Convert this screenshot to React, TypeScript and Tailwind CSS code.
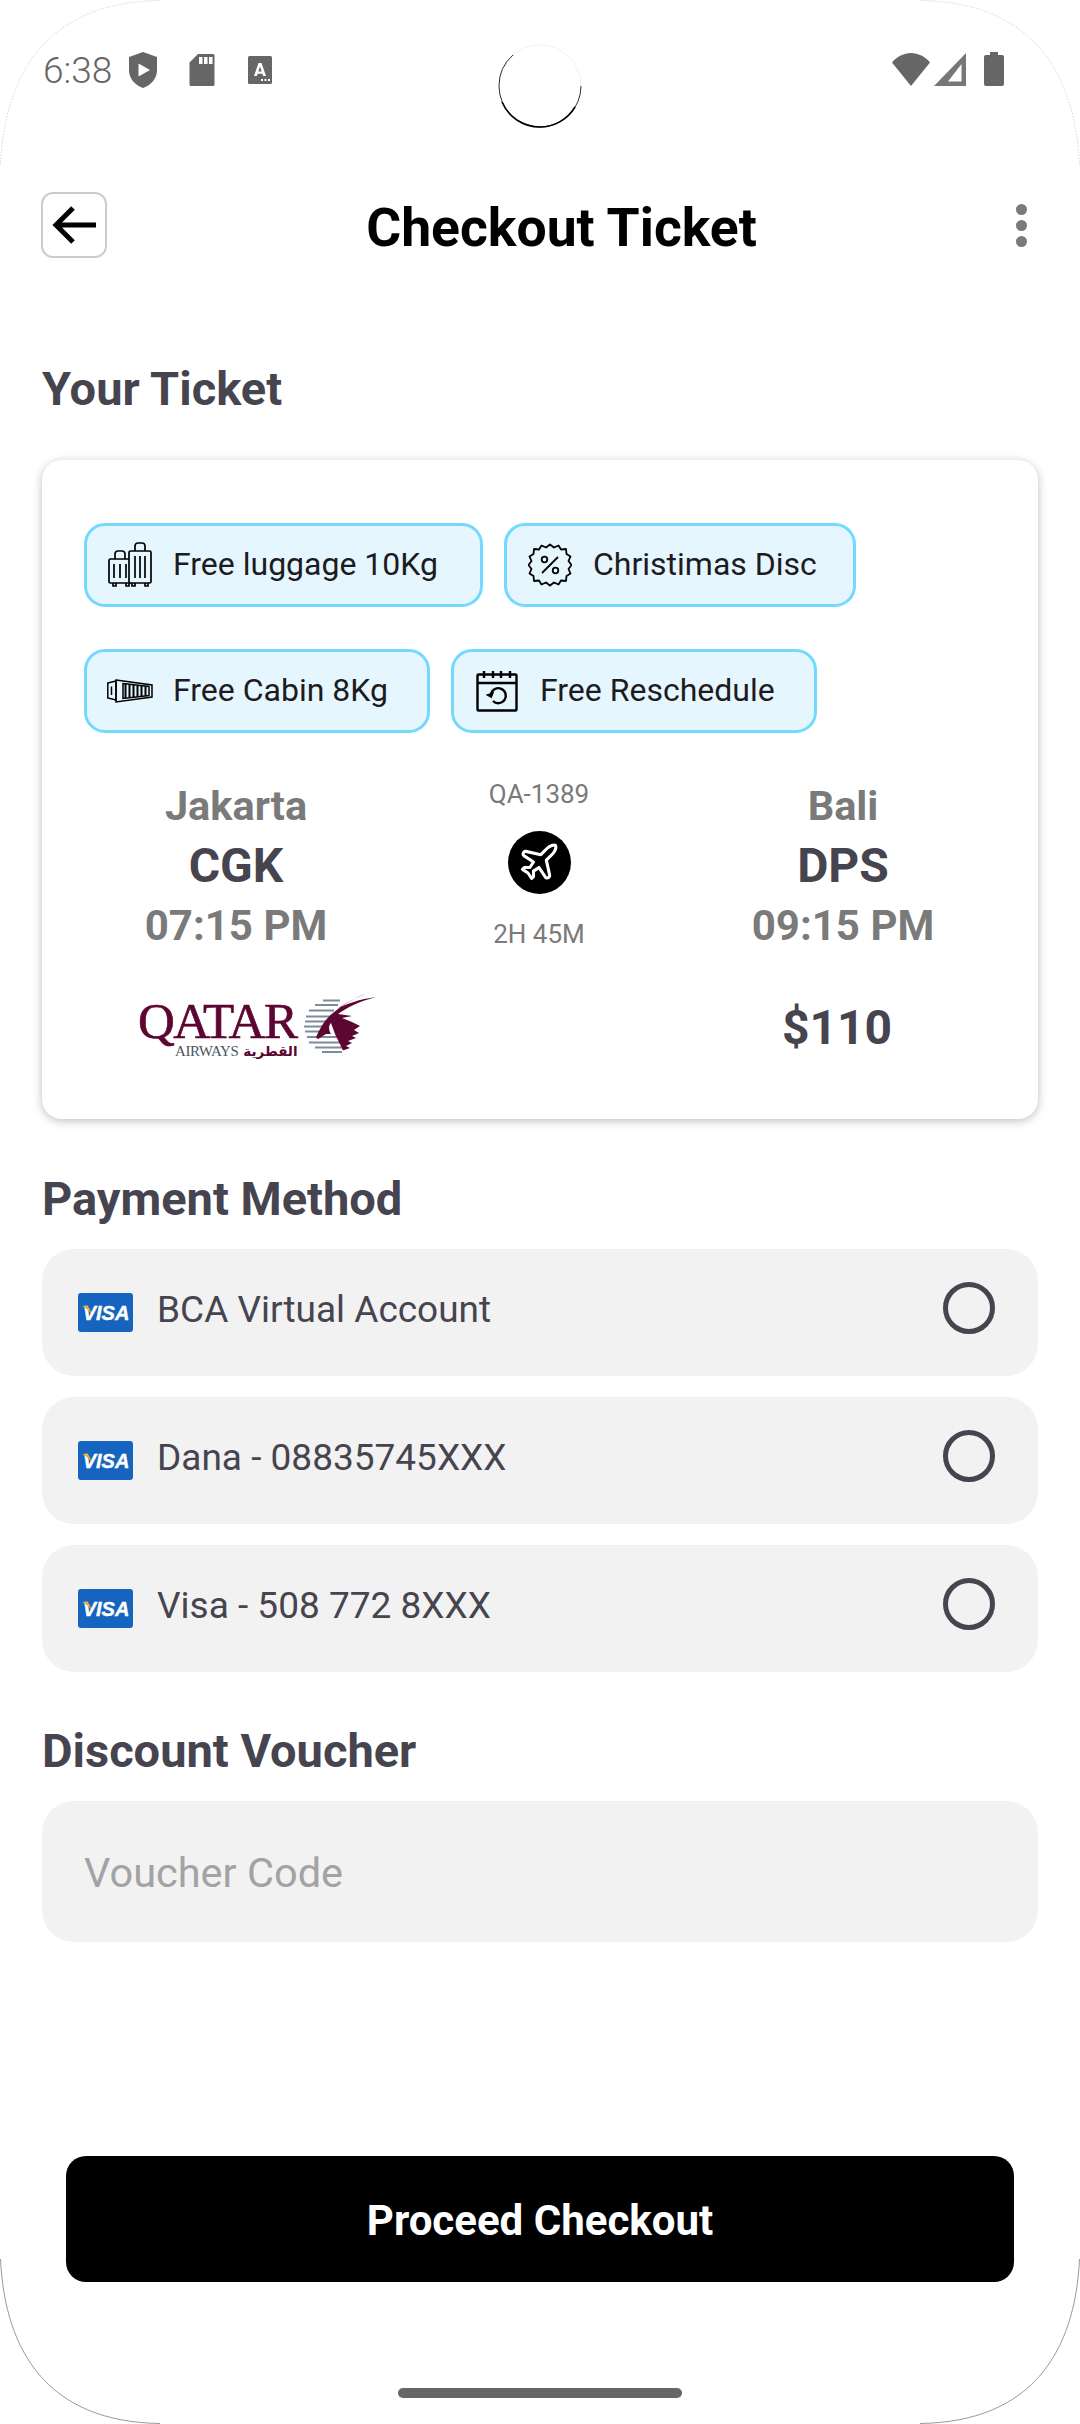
import React from "react";
import { Plane } from "lucide-react";

const font = "font-['Roboto',sans-serif]";

function ShieldIcon() {
  return (
    <svg width="30" height="38" viewBox="0 0 30 38">
      <path d="M15 1L29 6V19C29 28 23 34 15 37C7 34 1 28 1 19V6Z" fill="#666" />
      <path d="M10.5 12.5L22 19L10.5 25.5Z" fill="#fff" />
    </svg>
  );
}

function SdIcon() {
  return (
    <svg width="26" height="34" viewBox="0 0 26 34">
      <path d="M9 1H24a1.500 1.500 0 0 1 1.500 1.500V31.500A1.500 1.500 0 0 1 24 33H2A1.500 1.500 0 0 1 .5 31.500V9.500Z" fill="#666" />
      <rect x="10" y="4" width="3.500" height="7" fill="#fff" />
      <rect x="15" y="4" width="3.500" height="7" fill="#fff" />
      <rect x="20" y="4" width="3.500" height="7" fill="#fff" />
    </svg>
  );
}

function AIcon() {
  return (
    <svg width="24" height="28" viewBox="0 0 24 28">
      <rect width="24" height="28" rx="1.500" fill="#666" />
      <path d="M6 20L10.500 7H13.500L18 20H15.200L12 10.500L8.800 20Z M9 15.500H15V17.800H9Z" fill="#fff" />
      <rect x="13" y="23" width="2" height="2" fill="#fff" />
      <rect x="16.500" y="23" width="2" height="2" fill="#fff" />
      <rect x="20" y="23" width="2" height="2" fill="#fff" />
    </svg>
  );
}

function StatusRight() {
  return (
    <div className="flex items-center">
      <svg width="38" height="33" viewBox="0 0 38 33">
        <path d="M19 33L0 9.500C5 3.500 12 0 19 0S33 3.500 38 9.500Z" fill="#666" />
      </svg>
      <svg width="32" height="33" viewBox="0 0 32 33" className="ml-[4px]">
        <path d="M32 0V33H0Z" fill="#777" />
        <path d="M27.500 11V28.500H14Z" fill="#fff" />
      </svg>
      <svg width="20" height="34" viewBox="0 0 20 34" className="ml-[18px]">
        <path d="M6 0H14V3H18a2 2 0 0 1 2 2V32a2 2 0 0 1-2 2H2a2 2 0 0 1-2-2V5a2 2 0 0 1 2-2H6Z" fill="#666" />
      </svg>
    </div>
  );
}

function LuggageIcon() {
  return (
    <svg width="44" height="46" viewBox="0 0 44 46" fill="none" stroke="#000" strokeWidth="1.700">
      <rect x="1" y="17" width="22" height="24" rx="1.500" />
      <rect x="21" y="9" width="22" height="32" rx="1.500" fill="#e5f6ff" />
      <path d="M7 17V12a3 3 0 0 1 3-3h4a3 3 0 0 1 3 3v5M27 9V4a3 3 0 0 1 3-3h4a3 3 0 0 1 3 3v5" />
      <path d="M6 22V36M12 22V36M18 22V36M27 14V36M32 14V36M37 14V36" />
      <path d="M5 41v3h3v-3M18 41v3h3v-3M24 41v3h3v-3M37 41v3h3v-3" />
    </svg>
  );
}

function CabinIcon() {
  return (
    <svg width="46" height="24" viewBox="0 0 46 24" fill="none" stroke="#000" strokeWidth="1.500">
      <path d="M.8 4L9 2V21L.8 19Z" />
      <path d="M9 1L45 6V18L9 23Z" />
      <path d="M4.500 7.500V16" />
      <path d="M16 4.500L42 7.500V16.500L16 19.500Z" />
      <path d="M18.500 5V19M22.500 5.500V18.500M26.500 6V18M30.500 6.500V17.500M34.500 7V17M38.500 7.500V16.500" strokeWidth="2" />
    </svg>
  );
}

function DiscountIcon() {
  return (
    <svg width="44" height="44" viewBox="0 0 44 44" fill="none" stroke="#000" strokeWidth="1.800">
      <path d="M22 1.500l4 3 4.500-2 2.500 4 5-.5.5 5 4 2.500-2 4.500 3 4-3 4 2 4.500-4 2.500-.5 5-5-.5-2.500 4-4.500-2-4 3-4-3-4.500 2-2.500-4-5 .5-.5-5-4-2.500 2-4.500-3-4 3-4-2-4.500 4-2.500.5-5 5 .5 2.500-4 4.500 2Z" strokeLinejoin="round" />
      <circle cx="16.500" cy="16.500" r="2.800" />
      <circle cx="27.500" cy="27.500" r="2.800" />
      <path d="M14 30L30 14" />
    </svg>
  );
}

function CalendarIcon() {
  return (
    <svg width="42" height="42" viewBox="0 0 42 42" fill="none" stroke="#000" strokeWidth="2.400">
      <rect x="1.500" y="4.500" width="39" height="36" rx="1" />
      <path d="M1.500 13H40.500" />
      <path d="M8 1V8M17 1V8M25 1V8M34 1V8" />
      <path d="M15 24a7.500 7.500 0 1 1 2 7" />
      <path d="M11 23.500h7l-3.500 4Z" fill="#000" strokeWidth="1" transform="rotate(-20 15 25)" />
    </svg>
  );
}

function VisaIcon() {
  return (
    <div className="relative mt-[9px] w-[55px] h-[39px] rounded-[3px] bg-[#1565c0] flex items-center justify-center">
      <span className="font-['Liberation_Sans',sans-serif] font-bold italic text-[20px] leading-none text-white [-webkit-text-stroke:0.4px_#fff] ml-[1px]">VISA</span>
      <svg width="10" height="10" viewBox="0 0 10 10" className="absolute left-[4px] top-[13px]">
        <path d="M0 0H5Q8 1 9.500 9Q6 2.500 0 0Z" fill="#f9a825" />
      </svg>
    </div>
  );
}

function QatarLogo() {
  return (
    <div className="flex items-start w-[248px] h-[70px]">
      <div className="flex flex-col w-[161px] ml-[1px] mt-[19px]">
        <span className="font-['Liberation_Serif',serif] text-[#5c0632] text-[51px] leading-[37px] h-[38px] tracking-[-1.500px] whitespace-nowrap [-webkit-text-stroke:0.7px_#5c0632]">QATAR</span>
        <div className="flex items-center mt-[4px] ml-[37px] whitespace-nowrap">
          <span className="font-['Liberation_Serif',serif] text-[#4a5560] text-[15px] leading-[13px] tracking-[-0.4px]">AIRWAYS</span>
          <span className="font-['DejaVu_Sans',sans-serif] font-bold text-[#5c0632] text-[13.500px] leading-[13px] ml-[5px]">القطرية</span>
        </div>
      </div>
      {/* emblem */}
      <svg width="85" height="70" viewBox="0 0 85 70" className="ml-[1px]">
        <g stroke="#7d8c98" strokeWidth="2.200">
          <path d="M23 16.500H40M15 21H38M9 26.500H34M6 32.500H31M5 37.500H27M4 42.500H24M5 47.500H21M7 53H38M9 58.500H42M15 63.500H43M22 68H42" />
        </g>
        <path d="M73 7C58 12 46 19 37 25C46 20 60 15 76 13C60 17 46 24 38 30L52 32L42 34L52 38L60 42L54 46L59 49L52 52L56 54L48 57L52 59L46 62L50 64L43 66.500L35 50L31 39C28 42 29 47 31 50L26 50L18 55L16 53.500C20 44 26 34 33 29C42 21 58 12 73 7Z" fill="#5c0632" />
      </svg>
    </div>
  );
}

function Chip(p: { icon: React.ReactNode; label: string; width: string }) {
  return (
    <div className={`${p.width} h-[84px] shrink-0 flex items-center rounded-[21px] border-[3px] border-[#73d9ff] bg-[#e5f6ff]`}>
      <div className="w-[86px] shrink-0 flex items-center justify-center">{p.icon}</div>
      <span className="pb-[2px] text-[32px] leading-none font-[450] text-[#1d1b20] whitespace-nowrap">{p.label}</span>
    </div>
  );
}

function City(p: { city: string; code: string; time: string; className: string }) {
  return (
    <div className={`${p.className} flex flex-col items-center`}>
      <span className="text-[41.5px] leading-[60px] font-bold text-[#7a7a7a]">{p.city}</span>
      <span className="text-[48px] leading-[60px] font-bold text-[#46444f]">{p.code}</span>
      <span className="text-[42px] leading-[60px] font-bold text-[#7a7a7a]">{p.time}</span>
    </div>
  );
}

function PaymentRow(p: { label: string }) {
  return (
    <div className="h-[127px] rounded-[32px] bg-[#f2f2f2] flex items-center justify-between pl-[36px] pr-[43px] pb-[8px]">
      <div className="flex items-center">
        <VisaIcon />
        <span className="ml-[24px] mt-[3px] text-[37px] leading-none text-[#46444f]">{p.label}</span>
      </div>
      <div className="w-[52px] h-[52px] rounded-full border-[5px] border-[#46444f]" />
    </div>
  );
}

function Corner(p: { className: string; dark?: boolean }) {
  return (
    <svg width="160" height="165" viewBox="0 0 160 165" fill="none" className={`absolute ${p.className}`}>
      <path
        d="M0.500 165C5 70 50 2 160 0.500"
        stroke={p.dark ? "#555" : "#aaa"}
        strokeWidth={p.dark ? 0.6 : 0.5}
        strokeDasharray={p.dark ? undefined : "1.500 1.500"}
      />
    </svg>
  );
}

export default function App() {
  return (
    <div className={`${font} relative w-[1080px] h-[2424px] bg-white overflow-hidden flex flex-col`}>
      <Corner className="left-0 top-0" />
      <Corner className="right-0 top-0 -scale-x-100" />
      <Corner dark className="left-0 bottom-0 -scale-y-100" />
      <Corner dark className="right-0 bottom-0 -scale-100" />

      {/* camera cutout */}
      <svg width="86" height="86" viewBox="0 0 86 86" fill="none" className="absolute left-[497px] top-[43px]">
        <circle cx="43" cy="43" r="41" stroke="#ddd" strokeWidth="0.400" />
        <path d="M16 12A41 41 0 0 0 2 43A41 41 0 0 0 43 84A41 41 0 0 0 84 43" stroke="#000" strokeWidth="0.800" />
        <path d="M5 59A41 41 0 0 0 43 84A41 41 0 0 0 78 64" stroke="#000" strokeWidth="1.600" />
      </svg>

      {/* status bar */}
      <div className="h-[192px] shrink-0 pl-[43px] pt-[52px] pr-[76px] flex items-start justify-between">
        <div className="flex items-center h-[36px]">
          <span className="text-[37px] leading-none text-[#666] font-light">6:38</span>
          <div className="ml-[16px]"><ShieldIcon /></div>
          <div className="ml-[31px]"><SdIcon /></div>
          <div className="ml-[33px]"><AIcon /></div>
        </div>
        <StatusRight />
      </div>

      {/* header */}
      <div className="h-[66px] shrink-0 pl-[41px] pr-[53px] flex items-center justify-between">
        <div className="w-[66px] h-[66px] rounded-[12px] border-[2px] border-[#cccccc] flex items-center justify-center">
          <svg width="46" height="44" viewBox="0 0 46 44" fill="none" stroke="#000" strokeWidth="5">
            <path d="M45 22H5M22 5L5 22L22 39" />
          </svg>
        </div>
        <h1 className="mt-[6px] text-[53.500px] leading-none font-bold text-black">Checkout Ticket</h1>
        <div className="flex flex-col gap-[5px]">
          <span className="w-[11px] h-[11px] rounded-full bg-[#7a7a7a]" />
          <span className="w-[11px] h-[11px] rounded-full bg-[#7a7a7a]" />
          <span className="w-[11px] h-[11px] rounded-full bg-[#7a7a7a]" />
        </div>
      </div>

      <div className="px-[42px] flex flex-col">
        <h2 className="mt-[104.500px] text-[47px] leading-[52px] font-bold text-[#46444f]">Your Ticket</h2>

        {/* ticket card */}
        <div className="mt-[45px] h-[659px] rounded-[20px] bg-white shadow-[0_2px_10px_rgba(0,0,0,0.25)] flex flex-col pt-[63px]">
          <div className="pl-[42px] flex gap-[21px]">
            <Chip icon={<LuggageIcon />} label="Free luggage 10Kg" width="w-[399px]" />
            <Chip icon={<DiscountIcon />} label="Christimas Disc" width="w-[352px]" />
          </div>
          <div className="pl-[42px] mt-[42px] flex gap-[21px]">
            <Chip icon={<CabinIcon />} label="Free Cabin 8Kg" width="w-[346px]" />
            <Chip icon={<CalendarIcon />} label="Free Reschedule" width="w-[366px]" />
          </div>
          <div className="mt-[43px] flex">
            <City className="w-[388px]" city="Jakarta" code="CGK" time="07:15 PM" />
            <div className="w-[218px] flex flex-col items-center text-[#7a7a7a]">
              <span className="-mt-[2px] text-[26px] leading-[40px]">QA-1389</span>
              <div className="mt-[17px] w-[63px] h-[63px] rounded-full bg-black flex items-center justify-center">
                <Plane size={44} strokeWidth={1.700} color="#fff" />
              </div>
              <span className="mt-[20px] text-[26px] leading-[40px]">2H 45M</span>
            </div>
            <City className="w-[390px]" city="Bali" code="DPS" time="09:15 PM" />
          </div>
          <div className="mt-[28px] pl-[95px] flex items-center">
            <QatarLogo />
            <span className="ml-[397px] mt-[18px] text-[48px] leading-none font-bold text-[#46444f]">$110</span>
          </div>
        </div>

        <h2 className="mt-[54px] text-[47px] leading-[52px] font-bold text-[#46444f]">Payment Method</h2>
        <div className="mt-[24px] flex flex-col gap-[21px]">
          <PaymentRow label="BCA Virtual Account" />
          <PaymentRow label="Dana - 08835745XXX" />
          <PaymentRow label="Visa - 508 772 8XXX" />
        </div>

        <h2 className="mt-[53px] text-[47px] leading-[52px] font-bold text-[#46444f]">Discount Voucher</h2>
        <div className="mt-[24px] h-[141px] rounded-[32px] bg-[#f2f2f2] flex items-center pl-[42px]">
          <span className="pt-[4px] text-[41.500px] leading-none text-[#a3a3a3]">Voucher Code</span>
        </div>
      </div>

      <div className="mt-[214.500px] mx-[66px] h-[126px] rounded-[20px] bg-black flex items-center justify-center">
        <span className="pt-[3px] text-[42px] leading-none font-bold text-white">Proceed Checkout</span>
      </div>

      <div className="mt-[106px] mx-auto w-[284px] h-[10px] rounded-full bg-[#666]" />
    </div>
  );
}
